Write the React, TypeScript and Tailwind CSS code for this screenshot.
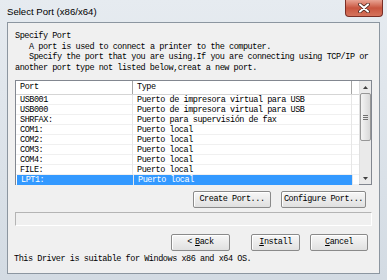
const ports = [
  ["USB001", "Puerto de impresora virtual para USB"],
  ["USB000", "Puerto de impresora virtual para USB"],
  ["SHRFAX:", "Puerto para supervisión de fax"],
  ["COM1:", "Puerto local"],
  ["COM2:", "Puerto local"],
  ["COM3:", "Puerto local"],
  ["COM4:", "Puerto local"],
  ["FILE:", "Puerto local"],
  ["LPT1:", "Puerto local"],
]

const mono = "font-['Liberation_Mono',monospace] text-[8.5px] tracking-[-0.45px] text-black"

function Btn({ w, children }: { w: string; children: React.ReactNode }) {
  return (
    <div
      className={`${w} h-[17px] flex items-center justify-center border border-[#8a8a8a] rounded-[2px] bg-gradient-to-b from-[#f7f7f7] to-[#e0e0e0] shadow-[inset_1px_1px_0_#fff] ${mono}`}
    >
      {children}
    </div>
  )
}

export default function App() {
  return (
    <div className="w-[387px] h-[280px] overflow-hidden bg-gradient-to-b from-[#e6ebf0] to-[#d3dbe3] flex flex-col">
      {/* title bar */}
      <div className="h-[22px] flex items-start relative shrink-0">
        <div className="pl-[7px] pt-[5px] font-['Liberation_Sans',sans-serif] text-[9.6px] text-black leading-[13px]">
          Select Port (x86/x64)
        </div>
        <div className="absolute right-[4px] top-0 w-[38px] h-[17px] rounded-b-[4px] border border-t-0 border-[#7a2e25] bg-gradient-to-b from-[#e8a394] via-[#c8553f] to-[#d5735c] flex items-center justify-center">
          <svg width="12" height="10" viewBox="0 0 12 10">
            <path d="M2 1.5 L10 8.5 M10 1.5 L2 8.5" stroke="#3a1a14" strokeWidth="3.6" strokeLinecap="round" />
            <path d="M2 1.5 L10 8.5 M10 1.5 L2 8.5" stroke="#ffffff" strokeWidth="2.2" strokeLinecap="round" />
          </svg>
        </div>
      </div>

      {/* client area */}
      <div className="mx-[7px] h-[252px] border border-[#8c96a0] bg-[#f0f0f0] flex flex-col">
        <div className={`${mono} leading-[10.5px] pl-[7px] pt-[8px]`}>
          <div>Specify Port</div>
          <div className="pl-[14px]">A port is used to connect a printer to the computer.</div>
          <div className="pl-[14px]">Specify the port that you are using.If you are connecting using TCP/IP or</div>
          <div>another port type not listed below,creat a new port.</div>
        </div>

        {/* list view */}
        <div className="mx-[7px] mt-[7px] h-[105px] border border-[#828790] bg-white flex">
          <div className="flex-1 flex flex-col">
            <div className="h-[14px] flex border-b border-[#d5d5d5] bg-white">
              <div className={`w-[117px] border-r border-[#a5a5a5] pl-[4px] flex items-center ${mono}`}>Port</div>
              <div className={`w-[219px] border-r border-[#a5a5a5] pl-[4px] flex items-center ${mono}`}>Type</div>
              <div className="flex-1" />
            </div>
            {ports.map(([p, t], i) => {
              const sel = i === ports.length - 1
              return (
                <div key={p} className="h-[10px] flex shadow-[inset_0_-1px_0_#f0f0f0]">
                  <div
                    className={`w-[117px] shadow-[inset_-1px_0_0_#e6e6e6] pl-[4px] flex items-center leading-[10px] ${mono} ${sel ? "bg-[#3399ff] !text-white ml-[1px] pl-[3px]" : ""}`}
                  >
                    {p}
                  </div>
                  <div
                    className={`w-[219px] shadow-[inset_-1px_0_0_#e6e6e6] pl-[4px] flex items-center leading-[10px] ${mono} ${sel ? "bg-[#3399ff] !text-white" : ""}`}
                  >
                    {t}
                  </div>
                  <div className="flex-1" />
                </div>
              )
            })}
          </div>
          {/* scrollbar */}
          <div className="w-[12px] bg-[#eaeaea] border-l border-[#e0e0e0] flex flex-col items-center">
            <div className="h-[12px] w-full flex items-center justify-center">
              <svg width="5" height="3" viewBox="0 0 5 3">
                <path d="M0 3 L2.5 0 L5 3 Z" fill="#404040" />
              </svg>
            </div>
            <div className="w-[11px] h-[48px] rounded-[2px] border border-[#979797] bg-gradient-to-r from-[#f4f4f4] to-[#d8d8d8] flex flex-col items-center justify-center gap-[1px]">
              <div className="w-[5px] h-px bg-[#707070]" />
              <div className="w-[5px] h-px bg-[#707070]" />
              <div className="w-[5px] h-px bg-[#707070]" />
            </div>
            <div className="flex-1" />
            <div className="h-[12px] w-full flex items-center justify-center">
              <svg width="5" height="3" viewBox="0 0 5 3">
                <path d="M0 0 L2.5 3 L5 0 Z" fill="#404040" />
              </svg>
            </div>
          </div>
        </div>

        {/* port buttons */}
        <div className="flex justify-end gap-[10px] mt-[6px] mr-[13px]">
          <Btn w="w-[78px]">Create Port...</Btn>
          <Btn w="w-[85px]">Configure Port...</Btn>
        </div>

        {/* progress bar */}
        <div className="mx-[7px] mt-[4px] h-[14px] border border-[#b4b4b4] border-b-white border-r-white bg-[#f0f0f0]" />

        {/* dialog buttons */}
        <div className="flex justify-end mt-[8px] mr-[11px]">
          <Btn w="w-[59px]">
            &lt; <span className="underline ml-[3px]">B</span>ack
          </Btn>
          <div className="w-[21px]" />
          <Btn w="w-[49px]">
            <span className="underline">I</span>nstall
          </Btn>
          <div className="w-[10px]" />
          <Btn w="w-[58px]">
            <span className="underline">C</span>ancel
          </Btn>
        </div>

        <div className={`${mono} leading-[11px] pl-[6px] mt-[3px]`}>
          This Driver is suitable for Windows x86 and x64 OS.
        </div>
      </div>
    </div>
  )
}
